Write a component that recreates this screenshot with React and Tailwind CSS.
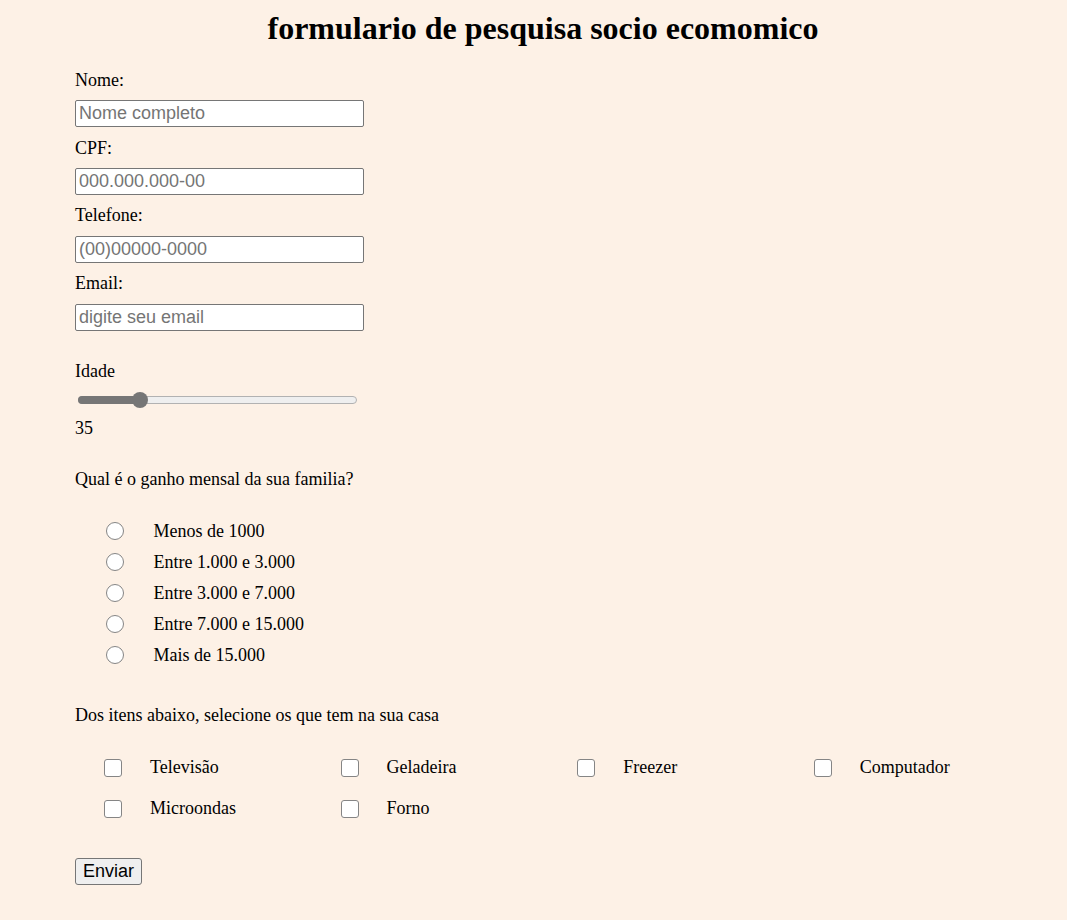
import React from "react";

const serif = { fontFamily: '"Liberation Serif", "Times New Roman", serif' };

function Label({ children, className = "" }) {
  return <div className={"h-[20px] leading-[20px] text-[18px] " + className}>{children}</div>;
}

function TextInput({ placeholder, className = "" }) {
  return (
    <input
      type="text"
      placeholder={placeholder}
      className={
        "block h-[27px] w-[289px] rounded-[2px] border border-[#767676] bg-white px-[3px] text-[18px] leading-[25px] text-black placeholder:text-[#757575] outline-none font-['Liberation_Sans',Arial,sans-serif] " +
        className
      }
    />
  );
}

function Radio({ label }) {
  return (
    <div className="flex h-[20px] items-center">
      <span className="ml-[31px] block h-[18px] w-[18px] rounded-full border border-[#858585] bg-white" />
      <span className="ml-[29.5px] text-[18px] leading-[20px]">{label}</span>
    </div>
  );
}

function Check({ label }) {
  return (
    <div className="flex h-[20px] items-center">
      <span className="mt-[2px] block h-[18px] w-[18px] rounded-[3px] border border-[#858585] bg-white" />
      <span className="ml-[28px] text-[18px] leading-[20px]">{label}</span>
    </div>
  );
}

export default function App() {
  return (
    <div className="min-h-screen bg-[#fdf1e6] text-black" style={serif}>
      <div className="pl-[75px] pr-[56px]">
        <h1 className="pt-[10px] text-center text-[32px] font-bold leading-[37px]">
          formulario de pesquisa socio ecomomico
        </h1>

        <div className="flex flex-col items-start">
          <Label className="mt-[23px]">Nome:</Label>
          <TextInput placeholder="Nome completo" className="mt-[10px]" />
          <Label className="mt-[11px]">CPF:</Label>
          <TextInput placeholder="000.000.000-00" className="mt-[10px]" />
          <Label className="mt-[10px]">Telefone:</Label>
          <TextInput placeholder="(00)00000-0000" className="mt-[11px]" />
          <Label className="mt-[10px]">Email:</Label>
          <TextInput placeholder="digite seu email" className="mt-[11px]" />

          <Label className="mt-[30px]">Idade</Label>
          <div className="relative ml-[3px] mt-[11px] h-[16px] w-[279px]">
            <div className="absolute left-0 right-0 top-[4px] h-[8px] rounded-full border border-[#b2b2b2] bg-[#efefef]" />
            <div className="absolute left-0 top-[4px] h-[8px] w-[62px] rounded-l-full bg-[#767676]" />
            <div className="absolute left-[54px] top-0 h-[16px] w-[16px] rounded-full bg-[#767676]" />
          </div>
          <Label className="mt-[10px]">35</Label>

          <Label className="mt-[31px]">Qual é o ganho mensal da sua familia?</Label>
          <div className="mt-[32px] flex flex-col gap-[11px]">
            <Radio label="Menos de 1000" />
            <Radio label="Entre 1.000 e 3.000" />
            <Radio label="Entre 3.000 e 7.000" />
            <Radio label="Entre 7.000 e 15.000" />
            <Radio label="Mais de 15.000" />
          </div>

          <Label className="mt-[40px]">Dos itens abaixo, selecione os que tem na sua casa</Label>
          <div className="ml-[29px] mt-[32px] grid w-max grid-cols-[repeat(4,236.6px)] gap-y-[21px]">
            <Check label="Televisão" />
            <Check label="Geladeira" />
            <Check label="Freezer" />
            <Check label="Computador" />
            <Check label="Microondas" />
            <Check label="Forno" />
          </div>

          <button
            type="button"
            className="mt-[40px] h-[27px] rounded-[3px] border border-[#767676] bg-[#efefef] px-[7px] text-[18px] leading-[25px] text-black font-['Liberation_Sans',Arial,sans-serif]"
          >
            Enviar
          </button>
        </div>
      </div>
    </div>
  );
}
